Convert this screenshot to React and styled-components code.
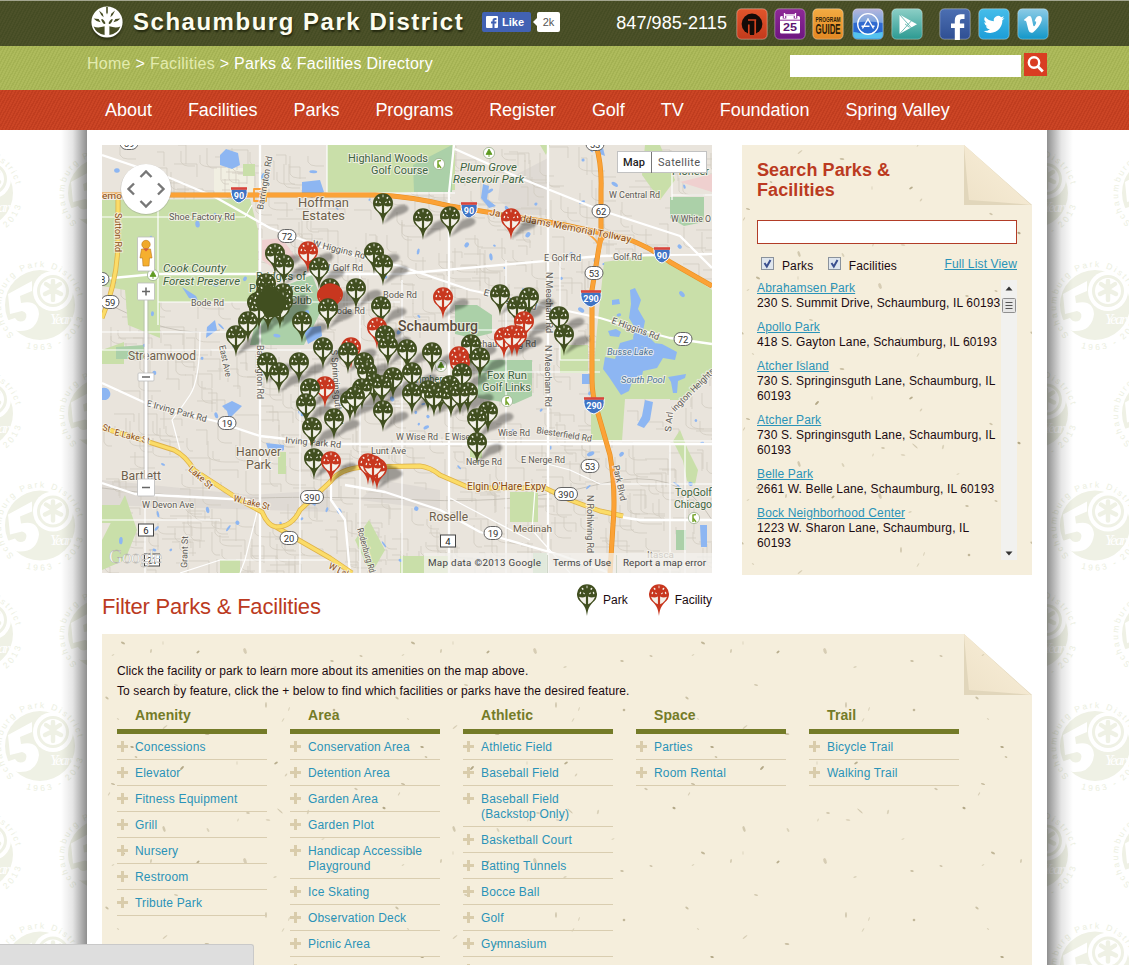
import React from "react";
import styled, { createGlobalStyle, css } from "styled-components";

const Global = createGlobalStyle`
  * { box-sizing: border-box; }
  body { margin: 0; background: #fff; font-family: "Liberation Sans", Arial, sans-serif; font-size: 12px; color: #1b0a10; overflow: hidden; }
  ul { list-style: none; margin: 0; padding: 0; }
  h1, h2, h3, p { margin: 0; }
  svg { display: block; }
`;

/* ---------- shell ---------- */
const Screen = styled.div`
  position: relative;
  height: 965px;
  overflow: hidden;
  display: flex;
  flex-direction: column;
`;
const stripes = (a, b) => css`
  background: repeating-linear-gradient(118deg, ${a} 0 1.6px, ${b} 1.6px 3px);
`;
const Band = styled.div`
  flex: none;
  height: ${(p) => p.$h}px;
  ${(p) => stripes(p.$a, p.$b)}
  ${(p) => p.$edge && `border-top: 1px solid #a3a690;`}
`;
const Inner = styled.div`
  width: 962px;
  height: 100%;
  margin-left: 87px;
  display: flex;
  align-items: ${(p) => p.$align || "center"};
`;

/* ---------- header ---------- */
const Brand = styled.h1`
  font-size: 24px;
  line-height: 28px;
  font-weight: bold;
  letter-spacing: 1.52px;
  color: #fdfdf0;
  margin: -4px 0 0 10px;
  width: 349px;
  white-space: nowrap;
  text-shadow: 1px 2px 2px #23280f;
`;
const Logo = styled.svg`
  margin: -3px 0 0 4px;
  flex: none;
  filter: drop-shadow(0 2px 1px #2b3014);
`;
const Like = styled.div`
  display: flex;
  align-items: center;
  gap: 4px;
  width: 49px;
  height: 20px;
  margin-top: -4px;
  padding-left: 4px;
  border-radius: 2px;
  background: #4262b3;
  color: #fff;
  font-size: 11px;
  font-weight: bold;
`;
const Count = styled.div`
  position: relative;
  width: 23px;
  height: 20px;
  margin: -4px 0 0 6px;
  border-radius: 2px;
  background: #fff;
  color: #555;
  font-size: 11px;
  line-height: 20px;
  text-align: center;
  &::before {
    content: "";
    position: absolute;
    left: -4px;
    top: 6px;
    border: 4px solid transparent;
    border-right-color: #fff;
    border-left: 0;
  }
`;
const Phone = styled.div`
  font-size: 18px;
  letter-spacing: 0.08px;
  color: #fff;
  margin-left: auto;
  padding-right: 9px;
`;
const Tiles = styled.div`
  display: flex;
  margin-top: 0;
`;
const Tile = styled.svg`
  width: 32px;
  height: 32px;
  margin-left: ${(p) => p.$gap || 0}px;
`;
const Crumbs = styled.div`
  font-size: 16px;
  line-height: 20px;
  margin-top: 8px;
  letter-spacing: 0.28px;
  color: #fff;
  white-space: nowrap;
`;
const Faint = styled.span`
  color: #e3ebae;
`;
const SiteSearch = styled.div`
  display: flex;
  margin: 7px 2px 0 auto;
`;
const SiteInput = styled.div`
  width: 231px;
  height: 22px;
  margin: 2px 3px 0 0;
  background: #fff;
`;
const SiteGo = styled.div`
  width: 23px;
  height: 23px;
  background: #d93d22;
`;
const Nav = styled.nav`
  display: flex;
  gap: 36px;
  padding-left: 18px;
  font-size: 18px;
  letter-spacing: -0.035px;
  color: #fff;
  white-space: nowrap;
`;

/* ---------- body ---------- */
const Body = styled.div`
  flex: 1;
  display: flex;
  min-height: 0;
`;
const Gutter = styled.div`
  flex: none;
  width: ${(p) => p.$w}px;
  position: relative;
  &::after {
    content: "";
    position: absolute;
    top: 0;
    bottom: 0;
    ${(p) => p.$side}: 0;
    width: 26px;
    background: linear-gradient(to ${(p) => p.$side}, transparent, rgba(0, 0, 0, 0.1) 45%, rgba(0, 0, 0, 0.44));
  }
`;
const Page = styled.main`
  width: 960px;
  flex: none;
  background: #fff;
  padding: 15px;
  display: flex;
  flex-direction: column;
`;
const Top = styled.div`
  display: flex;
  gap: 30px;
  height: 489px;
  flex: none;
`;
const Left = styled.div`
  width: 610px;
`;
const LegendRow = styled.div`
  display: flex;
  height: 61px;
`;
const FilterTitle = styled.h2`
  font-size: 22px;
  line-height: 26px;
  font-weight: normal;
  letter-spacing: -0.2px;
  color: #bb3a21;
  margin-top: 21px;
  white-space: nowrap;
`;
const Legend = styled.div`
  display: flex;
  margin: 11px 0 0 auto;
  line-height: 32px;
`;
const LegendItem = styled.div`
  display: flex;
  gap: 6px;
  margin-left: 21px;
`;

/* ---------- paper panels ---------- */
const Paper = styled.section`
  position: relative;
  background: #f5eedc;
  width: ${(p) => p.$w}px;
  height: ${(p) => p.$h}px;
`;
const PaperTexture = styled.svg`
  position: absolute;
  inset: 0;
`;
const SearchBody = styled.div`
  position: relative;
  padding: 15px;
`;
const SearchTitle = styled.h2`
  font-size: 18px;
  line-height: 20px;
  color: #bb3a21;
  letter-spacing: 0.08px;
  width: 170px;
`;
const SearchField = styled.div`
  height: 24px;
  margin-top: 20px;
  border: 1px solid #b23c27;
  background: #fff;
`;
const Options = styled.div`
  display: flex;
  align-items: flex-start;
  height: 37px;
  padding: 12px 0 0 4px;
  white-space: nowrap;
  letter-spacing: 0.15px;
`;
const Box = styled.svg`
  margin: 1px 8px 0 0;
`;
const OptionLabel = styled.span`
  line-height: 20px;
  width: ${(p) => p.$w}px;
`;
const Anchor = styled.a`
  color: #2a93b8;
  text-decoration: underline;
  line-height: ${(p) => p.$lh || 15}px;
`;
const ListFrame = styled.div`
  display: flex;
  height: 279px;
`;
const Results = styled.ul`
  width: 245px;
  line-height: 15px;
  letter-spacing: 0.14px;
`;
const Result = styled.li`
  margin-bottom: 9px;
`;
const Address = styled.div`
  width: ${(p) => (p.$wide ? 260 : 242)}px;
`;
const Scrollbar = styled.svg`
  flex: none;
  margin: -1px 0 0 -1px;
`;
const FilterBody = styled.div`
  position: relative;
  padding: 27px 15px 0;
`;
const Intro = styled.p`
  line-height: 20px;
  letter-spacing: 0.1px;
`;
const Columns = styled.div`
  display: flex;
  gap: 23px;
`;
const Column = styled.div`
  width: 150px;
`;
const ColumnTitle = styled.h3`
  height: 33px;
  padding-left: 18px;
  font-size: 14px;
  line-height: 29px;
  letter-spacing: 0.1px;
  color: #747b28;
  border-bottom: 5px solid #747b28;
`;
const Feature = styled.li`
  position: relative;
  padding: 6px 0 4px 18px;
  min-height: 26px;
  line-height: 15px;
  letter-spacing: 0.18px;
  color: #2a93b8;
  border-bottom: 1px solid #d9cdb0;
  &::before,
  &::after {
    content: "";
    position: absolute;
    background: #d9ccab;
  }
  &::before { left: 0; top: 11px; width: 11px; height: 3px; }
  &::after { left: 4px; top: 7px; width: 3px; height: 11px; }
`;
const StatusBar = styled.div`
  position: absolute;
  left: 0;
  bottom: 0;
  width: 254px;
  height: 21px;
  background: #dedede;
  border: 1px solid #c9c9c9;
  border-width: 1px 1px 0 0;
  border-radius: 0 3px 0 0;
`;

/* ---------- drawings ---------- */
const TreeCuts = ({ fill }) => (
  <g fill={fill}>
    <ellipse cx="3.4" cy="9" rx=".7" ry="1.2" transform="rotate(20 3.4 9)" />
    <ellipse cx="16.6" cy="9" rx=".7" ry="1.2" transform="rotate(-20 16.6 9)" />
    <ellipse cx="5.6" cy="4.8" rx=".8" ry="1.2" transform="rotate(-35 5.6 4.8)" />
    <ellipse cx="14.4" cy="4.8" rx=".8" ry="1.2" transform="rotate(35 14.4 4.8)" />
    <ellipse cx="10" cy="3" rx=".5" ry="1.4" />
    <ellipse cx="7" cy="9.400" rx=".6" ry="1.2" transform="rotate(-50 7 9.400)" />
    <ellipse cx="13" cy="9.400" rx=".6" ry="1.2" transform="rotate(50 13 9.400)" />
    <path d="M2 12.8Q5.500 14.200 8.900 12.600V20.300Q3.800 18 2 12.800ZM18 12.800Q14.500 14.200 11.100 12.600V20.300Q16.200 18 18 12.800Z" />
  </g>
);
const PinShape = ({ color }) => (
  <g>
    <path d="M10 32C9.3 26 8 22 4 18.2A10 10 0 1 1 16 18.2C12 22 10.700 26 10 32Z" fill={color} />
    <TreeCuts fill="#f4f2ea" />
  </g>
);
const PARK = "#414f20";
const FACILITY = "#c8371f";
const LegendPin = ({ color }) => (
  <svg width="20" height="32"><PinShape color={color} /></svg>
);

const DistrictLogo = () => (
  <Logo width="32" height="32" viewBox="0 0 32 32">
    <circle cx="16" cy="16" r="15.6" fill="#fff" />
    <g fill="#474d25">
      <path d="M15.2 1h1.6v5.5l-.8 2-.8-2zM8 4.5l3.8 3.3.8 3.5-2.4-2.2zM24 4.5l-3.8 3.3-.8 3.5 2.4-2.2zM2.6 12.5l5 .6 2 3.2-4-1.4zM29.4 12.5l-5 .6-2 3.2 4-1.4z" />
      <ellipse cx="12.3" cy="15.5" rx="1.1" ry="3" transform="rotate(-35 12.3 15.5)" />
      <ellipse cx="19.7" cy="15.5" rx="1.1" ry="3" transform="rotate(35 19.7 15.5)" />
      <path d="M2.6 20.5Q7 22.5 13.6 20.3V29Q5.5 28 2.6 20.5ZM29.4 20.5Q25 22.5 18.4 20.3V29Q26.5 28 29.4 20.5Z" />
    </g>
  </Logo>
);

const TileBase = ({ id, from, to, gap, children }) => (
  <Tile $gap={gap} viewBox="0 0 32 32">
    <defs>
      <linearGradient id={id} x1="0" y1="0" x2="0" y2="1">
        <stop offset="0" stopColor={from} />
        <stop offset="1" stopColor={to} />
      </linearGradient>
    </defs>
    <rect x=".8" y=".8" width="30.4" height="30.4" rx="4.5" fill={`url(#${id})`} stroke="#fff" strokeOpacity=".35" />
    {children}
  </Tile>
);
const HeaderTiles = () => (
  <Tiles>
    <TileBase id="t1" from="#e2552b" to="#c23a1c">
      <circle cx="16" cy="16" r="10.400" fill="#130b08" />
      <path d="M12 12h8.200M12.800 16.500V26.500M19.200 12V26.500" stroke="#d2431f" strokeWidth="1.700" fill="none" />
      <path d="M14 20h4v7h-4z" fill="#130b08" />
    </TileBase>
    <TileBase id="t2" from="#8d2a96" to="#6d1580" gap={6}>
      <rect x="6" y="8" width="20" height="17.5" rx="1.5" fill="#fff" />
      <path d="M6 12.2h20" stroke="#8d2a96" />
      <path d="M10.5 5v5.5M21.5 5v5.5" stroke="#8d2a96" strokeWidth="3.6" />
      <path d="M10.5 5v5M21.5 5v5M10.5 7h11" stroke="#fff" strokeWidth="1.3" fill="none" />
      <text x="16" y="23" textAnchor="middle" fontSize="11" fontWeight="bold" textLength="14" lengthAdjust="spacingAndGlyphs" fill="#5d1470">25</text>
    </TileBase>
    <TileBase id="t3" from="#f3ab42" to="#e28722" gap={6}>
      <text x="3.6" y="13.6" textLength="25" lengthAdjust="spacingAndGlyphs" fontSize="7.6" fontWeight="bold" fill="#2c1d08">PROGRAM</text>
      <text x="3.6" y="25.6" textLength="25" lengthAdjust="spacingAndGlyphs" fontSize="14.5" fontWeight="bold" fill="#2c1d08">GUIDE</text>
    </TileBase>
    <TileBase id="t4" from="#b7b6dc" to="#2b8fe2" gap={8}>
      <path d="M1.5 15Q16 12 30.5 15V24Q16 27 1.5 24Z" fill="#1f5ccc" opacity=".8" />
      <path d="M1.500 24Q16 27 30.500 24V27Q30 30.500 26 30.500H6Q2 30.500 1.500 27Z" fill="#55c3ee" />
      <circle cx="16" cy="16" r="10.3" fill="none" stroke="#fff" strokeWidth="1.300" />
      <path d="M10.500 20.500L16.300 10.500M21.500 20.500L15.700 10.500M9.500 18.200H17.500M20.500 18.200H22.500" stroke="#fff" strokeWidth="1.400" fill="none" />
    </TileBase>
    <TileBase id="t5" from="#8ccfc6" to="#2c9a92" gap={7}>
      <path d="M8.5 6.5L26 16.2 8.5 26Z" fill="#fff" />
      <path d="M8.5 6.5L20.5 20M8.5 26L20.5 12.7M14 15.9l4.5 3.5" stroke="#4aaba2" strokeWidth=".8" />
    </TileBase>
    <TileBase id="t6" from="#4c6fb2" to="#2f4f93" gap={16}>
      <path d="M15.800 32V20H12V15.500H15.800V12.300Q15.800 6.300 21.600 6.300H25.500V11H22.800Q20.900 11 20.900 13V15.500H25.200V20H20.900V32Z" fill="#fff" />
    </TileBase>
    <TileBase id="t7" from="#46bdea" to="#1c9dd8" gap={7}>
      <g transform="translate(5.6 6) scale(.87)">
        <path fill="#fff" d="M23.95 4.57a10 10 0 0 1-2.82.77 4.96 4.96 0 0 0 2.16-2.72c-.95.55-2 .96-3.13 1.18a4.92 4.92 0 0 0-8.38 4.48C7.69 8.1 4.07 6.13 1.64 3.16a4.92 4.92 0 0 0 1.52 6.57 4.9 4.9 0 0 1-2.23-.61v.06a4.92 4.92 0 0 0 3.95 4.83 5 5 0 0 1-2.21.08 4.94 4.94 0 0 0 4.6 3.42A9.87 9.87 0 0 1 0 19.54a14 14 0 0 0 7.55 2.21c9.05 0 14-7.5 14-13.98 0-.21 0-.42-.02-.63a9.94 9.94 0 0 0 2.46-2.55z" />
      </g>
    </TileBase>
    <TileBase id="t8" from="#8ccbe6" to="#1297c9" gap={7}>
      <path d="M7 11.800L11.200 8.300Q14 7.200 14.700 10.500L16.200 17.200Q17 19.800 19 15.400 19.900 12.800 17.600 13.200 19 7.700 22.600 7.900 25.600 8.300 24.600 12.800 22.600 19 16 24.400 12.600 25.800 11.400 22L9.400 14Q8.800 12.200 7.800 13Z" fill="#fff" />
    </TileBase>
  </Tiles>
);

/* speckles: x, y, rx, ry, angle, opacity */
const SPECKS = [
  [21, 9, 2.2, 1, 25, 0.6], [61, 9, 0.6, 2, 0, 0.25], [49, 17, 0.6, 2, 5, 0.6], [96, 18, 1.8, 1, -35, 0.7], [143, 17, 1.6, 3, -20, 0.35],
  [259, 22, 1.6, 0.9, 20, 0.45], [230, 27, 1.8, 0.9, 10, 0.5], [11, 21, 1.5, 0.6, -30, 0.3], [173, 33, 1.8, 0.8, -20, 0.3], [74, 51, 2, 0.9, 15, 0.4],
  [5, 64, 2, 1, 40, 0.5], [164, 71, 0.6, 3, 0, 0.65], [187, 75, 0.6, 2, 20, 0.3], [181, 86, 2.4, 0.6, -60, 0.3], [16, 85, 1.3, 0.7, 30, 0.3],
  [232, 76, 1.3, 1.3, 0, 0.6], [63, 93, 3, 0.7, -40, 0.35], [105, 100, 2.4, 0.9, 8, 0.5], [30, 113, 1.8, 1, 15, 0.75], [34, 123, 1.4, 0.9, 20, 0.5],
  [135, 129, 0.6, 2, 0, 0.25], [174, 129, 2, 1, -30, 0.7], [80, 134, 2.5, 1, -45, 0.75], [11, 150, 2.1, 0.9, 15, 0.55], [7, 160, 2, 0.6, -60, 0.35],
  [184, 141, 1.8, 0.7, -50, 0.35], [254, 155, 1.8, 0.9, 25, 0.45], [282, 174, 1.7, 1.1, 30, 0.75], [178, 177, 3.6, 0.6, 42, 0.4], [146, 179, 1.9, 1, 10, 0.4],
  [206, 178, 1, 2.2, 15, 0.3], [136, 186, 0.6, 1.6, 20, 0.3], [166, 186, 2.4, 0.7, 8, 0.35], [62, 195, 1.3, 3, -20, 0.4], [106, 196, 1, 2.2, -30, 0.3], [221, 205, 1.6, 0.6, -20, 0.3],
];
const Texture = ({ id, w, h, ox, oy, fw, fh }) => (
  <PaperTexture width={w} height={h}>
    <defs>
      <pattern id={id} width="290" height="210" patternUnits="userSpaceOnUse" x={ox} y={oy}>
        {SPECKS.map(([x, y, rx, ry, a, o], i) => (
          <ellipse key={i} cx={x} cy={y} rx={rx} ry={ry} transform={`rotate(${a} ${x} ${y})`} fill="#8f8158" opacity={o * 0.85} />
        ))}
      </pattern>
      <linearGradient id={`${id}f`} x1="0" y1="1" x2=".6" y2=".4">
        <stop offset="0" stopColor="#eee2c8" />
        <stop offset="1" stopColor="#f5ead3" />
      </linearGradient>
    </defs>
    <path d={`M${w - fw} 0H${w}V${fh}Z`} fill="#fff" />
    <path d={`M${w - fw} 0V${fh}L${w} ${fh}Z`} fill="#d9ccad" opacity=".7" />
    <path d={`M${w - fw} 0Q${w - fw + 3} ${fh * 0.6} ${w - fw + 5} ${fh - 5}Q${w - 32} ${fh - 3} ${w - 1} ${fh}Z`} fill={`url(#${id}f)`} />
    <path d={`M0 0H${w - fw}L${w} ${fh}V${h}H0Z`} fill={`url(#${id})`} />
  </PaperTexture>
);

const Watermark = ({ x, y }) => (
  <g transform={`translate(${x} ${y})`}>
    <circle r="35" fill="#eff1e5" />
    <path d="M-32 -11L-8 -24V-14L-20 -9 -19 -2Q-2 -6 -1 9 -3 27 -22 26 -32 24 -34 16L-25 13Q-21 19 -15 15 -11 8 -18 6L-30 9Z" fill="#fff" />
    <circle cx="13" cy="-14" r="20" fill="#fff" />
    <circle cx="13" cy="-14" r="14.500" fill="none" stroke="#eff1e5" strokeWidth="3" />
    <g stroke="#eff1e5" strokeWidth="4.500" strokeLinecap="round">
      <path d="M13 -14V-5M12 -17L6 -21M14 -17L20 -21M11 -14L5 -11M15 -14L21 -11M13 -18V-24" />
    </g>
    <text x="10" y="19" fontSize="15" fontStyle="italic" fontFamily="Liberation Serif, serif" fill="#fff" textLength="26">Years</text>
    <text fontSize="8.500" letterSpacing="2.100" fill="#ecefe1"><textPath href="#ringTop">Schaumburg Park District</textPath></text>
    <text fontSize="8.500" letterSpacing="2.600" fill="#ecefe1"><textPath href="#ringLow">1963 - 2013</textPath></text>
  </g>
);
const Marks = ({ w, cols }) => (
  <svg width={w} height="835" viewBox={`0 130 ${w} 835`}>
    <defs>
      <path id="ringTop" d="M-26 30A39 39 0 1 1 39 4" />
      <path id="ringLow" d="M-14 43A45.500 45.500 0 0 0 45 3" />
    </defs>
    {[0, 1, 2, 3].map((r) => (
      <g key={r}>
        <Watermark x={cols[0]} y={193 + r * 220.5} />
        <Watermark x={cols[2]} y={193 + r * 220.5} />
        <Watermark x={cols[1]} y={305 + r * 220.5} />
      </g>
    ))}
  </svg>
);

/* ---------- map ---------- */
const MapSvg = styled.svg`
  font-family: Roboto, sans-serif;
`;
const P = [
  [383, 203], [423, 218], [450, 216], [511, 218, 1], [374, 252], [275, 253], [308, 251, 1], [383, 264], [284, 264], [319, 267],
  [266, 283], [356, 288], [330, 288], [266, 293], [283, 293], [500, 294], [327, 295, 1], [333, 294, 1], [330, 293, 1], [443, 297, 1], [529, 297],
  [257, 302], [262, 299], [283, 301], [270, 303], [273, 297], [381, 306], [517, 306], [268, 309], [280, 307], [259, 308], [328, 308], [559, 316], [302, 321],
  [248, 321], [524, 321, 1], [377, 327, 1], [564, 334], [236, 335], [385, 335], [517, 335, 1], [504, 337, 1], [512, 335, 1], [471, 344],
  [388, 345], [323, 347], [351, 347, 1], [348, 352], [407, 349], [432, 352], [459, 356, 1], [480, 357], [299, 362], [267, 362], [364, 362], [460, 362, 1],
  [367, 371], [279, 372], [462, 373], [412, 372], [393, 377], [374, 383], [382, 385], [325, 386, 1], [450, 385], [310, 388], [362, 388], [428, 390], [468, 392], [412, 393], [440, 392], [434, 395],
  [451, 396], [460, 393], [350, 400], [355, 396], [306, 403], [383, 410], [488, 411], [334, 418], [477, 418], [312, 427], [477, 442], [314, 458], [331, 461, 1], [368, 463, 1], [377, 468, 1], [373, 465, 1],
];
const rng = (() => {
  let s = 77;
  return () => ((s = (s * 16807) % 2147483647) / 2147483647);
})();
const STREETS = Array.from({ length: 900 }, () => {
  const x = Math.round(102 + rng() * 610), y = Math.round(145 + rng() * 428);
  const l = 6 + rng() * 20, h = 5 + rng() * 16;
  return rng() > 0.5 ? `M${x} ${y}h${l.toFixed(0)}v${h.toFixed(0)}` : `M${x} ${y}v${h.toFixed(0)}q2 4 ${(l / 2).toFixed(0)} 4h${(l / 2).toFixed(0)}`;
}).join("");
const PONDS = Array.from({ length: 100 }, () => {
  const x = 105 + rng() * 600, y = 148 + rng() * 415;
  return [x, y, 1 + rng() * 3, 0.8 + rng() * 1.5, rng() * 180];
});
const WHITE_MAIN =
  "M102 155L170 178 215 197 270 228 330 250 400 266 470 290 540 305 600 318 640 330 670 338 712 344M102 383L150 405 215 421 260 436 330 444 712 444M260 573V145M454 145L449 193V573M548 145V573M102 279L155 274H400L600 256 712 254M455 149L520 178 600 210 680 236 712 268M345 485L385 492 440 510 480 532 560 555 610 573M331 460V500L345 520 350 573M102 483L135 494 250 500M620 517L640 520H712";
const WHITE_MINOR =
  "M102 217H245L252 205M158 180V325M158 302H400M102 332H240M200 332Q200 380 190 395T172 420L180 450M360 573V262M402 573V280M327 145V193H455M506 260V573M600 360H560V260M455 372H600M590 443H670V573M540 462L570 470 600 484H712M672 200V160M672 195H712M450 498L530 540M260 480V500L245 560 240 573M102 350H360M145 573V500M400 330H548M300 350V573M306 406H400M180 573L220 560H330M418 440L712 441M685 443V573M535 490L532 530 570 573M102 520H220";

const Shield = ({ x, y, n }) => (
  <g transform={`translate(${x} ${y})`}>
    <path d={n.length > 2 ? "M-10 -6H10Q11 2 7 5T0 9Q-3 9-7 5T-10-6Z" : "M-8 -6H8Q9 2 5 5T0 8Q-2 8-5 5T-8-6Z"} fill="#3f73c4" stroke="#fff" />
    <path d={n.length > 2 ? "M-10 -6.5H10" : "M-8 -6.5H8"} stroke="#d9453c" strokeWidth="2.6" />
    <text y="4.2" fontSize="9" fontWeight="bold" fill="#fff" textAnchor="middle">{n}</text>
  </g>
);
const Oval = ({ x, y, n }) => (
  <g>
    <rect x={x - (n.length > 2 ? 11.5 : 9)} y={y - 6.5} width={n.length > 2 ? 23 : 18} height="13" rx="6.5" fill="#fff" stroke="#555" strokeWidth=".9" />
    <text x={x} y={y + 3.5} fontSize="9.5" fill="#333" textAnchor="middle">{n}</text>
  </g>
);
const Plate = ({ x, y, n }) => (
  <g>
    <rect x={x - 7.5} y={y - 6} width="15" height="12" fill="#fff" stroke="#444" />
    <text x={x} y={y + 3.6} fontSize="9.5" fill="#222" textAnchor="middle">{n}</text>
  </g>
);
/* text, x, y, width, size, colour, rotation, style */
const ROAD = "#5d5a55", TOWN = "#6e5f4c", GREEN = "#3d6340", HWY = "#8a4b10";
const LABELS = [
  ["Highland Woods", 348, 162, 80, 11, GREEN], ["Golf Course", 371, 174, 57, 11, GREEN],
  ["Plum Grove", 460, 171, 57, 11, GREEN, 0, "italic"], ["Reservoir Park", 453, 183, 71, 11, GREEN, 0, "italic"],
  ["Hoffman", 298, 207, 51, 12.5, TOWN], ["Estates", 302, 220, 43, 12.5, TOWN],
  ["Cook County", 163, 272, 63, 11, GREEN, 0, "italic"], ["Forest Preserve", 163, 285, 77, 11, GREEN, 0, "italic"],
  ["Shoe Factory Rd", 169, 220, 66, 9, ROAD], ["Bode Rd", 191, 306, 33, 9, ROAD], ["Bode Rd", 383, 298, 34, 9, ROAD], ["Bode Rd", 331, 314, 34, 9, ROAD],
  ["Streamwood", 128, 360, 68, 12, TOWN], ["Schaumburg", 398, 331, 80, 14, "#5a4d3f"],
  ["Hanover", 236, 456, 45, 12.5, TOWN], ["Park", 246, 469, 25, 12.5, TOWN], ["Bartlett", 121, 480, 40, 12, TOWN],
  ["Bridges of", 256, 280, 50, 11, GREEN], ["Poplar Creek", 249, 292, 62, 11, GREEN], ["Country Club", 249, 304, 63, 11, GREEN],
  ["W Higgins Rd", 312, 246, 54, 9, ROAD, 14], ["W Golf Rd", 322, 271, 41, 9, ROAD], ["E Golf Rd", 544, 261, 37, 9, ROAD], ["Golf Rd", 613, 260, 29, 9, ROAD],
  ["W Central Rd", 609, 198, 51, 9, ROAD], ["W White O", 671, 222, 40, 9, ROAD], ["E Higgins Rd", 611, 323, 50, 9, ROAD, 20],
  ["E Higgins Rd", 483, 295, 55, 9, ROAD, 16], ["W Schaumburg Rd", 462, 347, 74, 9, ROAD],
  ["Jane Addams Memorial Tollway", 489, 215, 144, 9.5, HWY, 11],
  ["Barrington Rd", 263, 210, 54, 9, ROAD, -80], ["Sutton Rd", 115, 213, 39, 9, HWY, 90], ["Barrington Rd", 257, 345, 54, 9, ROAD, 90], ["East Ave", 219, 346, 32, 9, ROAD, 78],
  ["N Meacham Rd", 546, 272, 61, 9, ROAD, 90], ["N Meacham Rd", 545, 345, 62, 9, ROAD, 90], ["S Springinsguth Rd", 331, 350, 75, 9, ROAD, 86],
  ["E Irving Park Rd", 146, 406, 62, 9, ROAD, 15], ["Irving Park Rd", 285, 443, 56, 9, ROAD, 5],
  ["E Lake St", 114, 435, 36, 9, HWY, 14], ["St", 102, 430, 8, 9, HWY, 14], ["Lake St", 188, 470, 29, 9, HWY, 42], ["W Lake St", 233, 501, 37, 9, HWY, 14], ["W Lake St", 328, 568, 37, 9, HWY, 26],
  ["W Devon Ave", 142, 508, 52, 9, ROAD], ["Grant St", 187, 568, 32, 9, ROAD, -88], ["Rodenburg Rd", 357, 529, 46, 9, ROAD, 74],
  ["W Wise Rd", 396, 440, 42, 9, ROAD], ["E Wise Rd", 445, 440, 37, 9, ROAD], ["Wise Rd", 498, 436, 32, 9, ROAD], ["Biesterfield Rd", 536, 433, 56, 9, ROAD, 9],
  ["Lunt Ave", 371, 454, 35, 9, ROAD], ["Nerge Rd", 466, 465, 36, 9, ROAD], ["E Nerge Rd", 521, 463, 44, 9, ROAD],
  ["Elgin O'Hare Expy", 467, 490, 79, 10, HWY], ["Roselle", 429, 521, 39, 12, TOWN], ["Medinah", 513, 532, 39, 9.5, TOWN], ["Itasca", 647, 558, 27, 9.5, TOWN],
  ["N Rohlwing Rd", 587, 495, 58, 9, ROAD, 90], ["Park Blvd", 613, 466, 36, 9, ROAD, 78],
  ["Busse Lake", 607, 355, 46, 9, "#4b7296", 0, "italic"], ["South Pool", 621, 383, 44, 9, "#4b7296", 0, "italic"],
  ["S Arl", 671, 432, 20, 9, ROAD, -84], ["ington Heights", 675, 412, 57, 9, ROAD, -45],
  ["Fox Run", 487, 379, 40, 11, GREEN], ["Golf Links", 482, 391, 49, 11, GREEN], ["Timbercrest", 414, 383, 48, 10, GREEN],
  ["TopGolf", 675, 496, 37, 11, GREEN], ["Chicago", 674, 508, 38, 11, GREEN], ["Pioneer", 672, 175, 37, 11, GREEN],
  ["emo", 102, 199, 20, 9.5, HWY],
];
const Leaf = ({ x, y, t }) => (
  <g>
    <circle cx={x} cy={y} r="5.6" fill="#fff" stroke="#9cb08d" strokeWidth=".8" />
    {t ? <path d={`M${x} ${y - 4}l3 5.4h-6zM${x} ${y}v4`} fill="#5f9a21" stroke="#5f9a21" strokeWidth=".8" /> : <path d={`M${x - 1} ${y + 4}v-7l3-.6M${x - 1} ${y}l3 4`} stroke="#77a52d" strokeWidth="1.5" fill="none" />}
  </g>
);
const ParkMap = () => (
  <MapSvg width="610" height="428" viewBox="102 145 610 428">
    <defs>
      <filter id="soft" x="-50%" y="-50%" width="200%" height="200%"><feGaussianBlur stdDeviation="1.1" /></filter>
    </defs>
    <rect x="102" y="145" width="610" height="428" fill="#e9e4dc" />
    <path d="M500 183L548 158V215H520L498 200ZM102 480L250 495 330 490V512L102 505ZM380 480L440 490V510L360 500Z" fill="#dfdad4" />
    <path d="M214 168h40v28h-40z" fill="#f1efe2" />
    <path d={STREETS} stroke="#d0cabf" strokeWidth=".7" fill="none" />
    <path d="M102 488Q200 500 260 498T420 500 600 484 712 520M102 300Q170 340 220 330" stroke="#bfbab0" strokeWidth=".8" fill="none" />
    <g fill="#c9dfa9">
      <path d="M327 145H455V190L400 193 327 192ZM102 200L250 199 258 230V302H160V338L128 325 125 290 102 286ZM604 262L660 254 712 290V372L684 400H670V399H625L622 441H591V400L597 330ZM102 540L125 495 137 530 125 560 102 570ZM645 145H660L675 180 660 200 642 175ZM102 505h22v18h-22zM243 164h12v12h-12zM278 452h8v22h-8zM355 540l14-20 16 30-14 24zM560 345h28v28h-28zM102 350l22-8v22h-22zM680 430l8 20 10 20-3 15-8-4-4-20-10-20zM510 492h28v30h-28zM400 556h50v17h-50zM220 560h20v13h-20zM470 450h12v8h-12zM540 145h10l-4 10z" />
    </g>
    <g fill="#abd0a8">
      <path d="M413 165L452 145V192H414ZM670 197h34v25l-20 4-14-8zM455 305h22l15 10v18l-20 5-17-4zM116 347l28-2v14h-28zM478 360h54v36l-18 8-36-6zM250 345l12-50 50-20 12 30-20 40zM533 553h14v20h-14zM676 530h10v20h-10z" />
    </g>
    <path d="M680 182l32 10v-18zM262 240l20-2 14 20-20 12-14-10zM640 400l20 5z" fill="#efd0cf" />
    <g fill="#8db6f2">
      {PONDS.map(([x, y, a, b, r], i) => <ellipse key={i} cx={x} cy={y} rx={a} ry={b} transform={`rotate(${r} ${x} ${y})`} />)}
      <path d="M630 290l5-2 6 12-3 9 7 12-2 10 12 12-2 7-10-4-6 2-4-10 2-10-6-10 2-14zM612 300l7-1 1 5-8 1zM608 331l8-2 5 3-2 5-9-1zM620 343l14-4 8 8 4-5 16 2 15 8-2 8-12-2-6 10-14 3-2 10-8-2-4 12-8 4-12-18-6-8 2-12 10 2zM668 377l18-3-1 4-7 3-1 12-4 0-2-11zM645 400l8 2-3 18-6 8-7-3 5-9zM220 155l6-6 12 4 2 12-8 4-12-4zM302 182l18-2 4 12-12 6-10-4zM222 406l10-5 10 5-5 5-8 8-2-8zM207 327l8-7 2 10-11 8zM483 184l6 2-2 13 9 7-7 2-8-10zM595 152l8-4 2 8zM266 443l18 2v5l-16-1zM102 388a6 6 0 0 1 4 12h-4zM303 328l18-2 1 10-14 8zM305 500l16-6-6 12zM700 525h7v22h-6zM582 374h8v10h-8zM182 287l14 9 2 5-9-3z" />
    </g>
    <path d={WHITE_MINOR} stroke="#fff" strokeWidth="1.2" fill="none" />
    <path d={WHITE_MAIN} stroke="#fff" strokeWidth="2.3" fill="none" strokeLinejoin="round" />
    <g fill="none" strokeLinejoin="round">
      {["M118 195V240Q118 280 102 318", "M102 428L130 436 174 450Q186 456 194 470L240 500 262 512Q268 526 276 527L330 558 352 573", "M276 527Q292 527 300 510L330 482Q340 468 365 467L420 466Q430 467 440 475L470 488 545 488 570 500 600 511 623 516"].map((d) => (
        <g key={d}>
          <path d={d} stroke="#dfb248" strokeWidth="5" />
          <path d={d} stroke="#fbdc68" strokeWidth="3.4" />
        </g>
      ))}
      {["M102 195H375Q410 196 450 206L560 224 625 238Q650 247 670 262L712 286", "M596 145Q602 165 601 190V235L592 290V380Q592 395 597 410L610 455Q616 490 613 525L610 573"].map((d) => (
        <g key={d}>
          <path d={d} stroke="#e8901f" strokeWidth="5" />
          <path d={d} stroke="#fba237" strokeWidth="3.8" />
        </g>
      ))}
      <path d="M254 189v12h12v-12zM585 232q14 8 15 18 0-10 8-16" stroke="#fba237" strokeWidth="1.8" />
    </g>
    {LABELS.map(([t, x, y, w, s, c, r, st], i) => (
      <text key={i} x={x} y={y} textLength={w} lengthAdjust="spacingAndGlyphs" fontSize={s} fill={c} fontStyle={st || "normal"} transform={r ? `rotate(${r} ${x} ${y})` : undefined} stroke="#f6f3ec" strokeWidth="2" strokeOpacity=".8" paintOrder="stroke" fontWeight={t === "Schaumburg" ? 500 : 400}>{t}</text>
    ))}
    <Leaf x={439} y={164} /><Leaf x={489} y={153} t /><Leaf x={153} y={275} t /><Leaf x={507} y={401} /><Leaf x={441} y={366} t /><Leaf x={694} y={518} />
    <Shield x={239} y={195} n="90" /><Shield x={469} y={210} n="90" /><Shield x={662} y={255} n="90" /><Shield x={591} y={298} n="290" /><Shield x={594} y={405} n="290" />
    <Oval x={287} y={236} n="72" /><Oval x={601} y={211} n="62" /><Oval x={594} y={273} n="53" /><Oval x={683} y={339} n="72" /><Oval x={110} y={302} n="59" /><Oval x={100} y={279} n="58" />
    <Oval x={227} y={423} n="19" /><Oval x={312} y={497} n="390" /><Oval x={590} y={466} n="53" /><Oval x={566} y={494} n="390" /><Oval x={493} y={533} n="19" /><Oval x={595} y={144} n="53" /><Oval x={129} y={143} n="59" /><Oval x={289} y={538} n="20" />
    <Plate x={146} y={530} n="6" /><Plate x={448} y={541} n="4" /><Plate x={152} y={560} n="21" />
    <g fill="#000" opacity=".32" filter="url(#soft)">
      {P.map(([x, y], i) => <path key={i} d={`M${x} ${y + 21}L${x + 11} ${y + 5}Q${x + 22} ${y - 1} ${x + 25} ${y + 4}T${x + 13} ${y + 13}Z`} />)}
    </g>
    {P.map(([x, y, f], i) => <g key={i} transform={`translate(${x - 10} ${y - 10})`}><PinShape color={f ? FACILITY : PARK} /></g>)}
    <circle cx="330" cy="295" r="11" fill={FACILITY} />
    <g transform="translate(318 298)"><PinShape color={PARK} /></g>
    <path d="M256 300l10-16 14 8 8 10-8 14-14 2z" fill={PARK} />

    <g>
      <circle cx="146" cy="189.500" r="25.500" fill="#8a8a8a" opacity=".35" />
      <circle cx="146" cy="189" r="25" fill="#fff" />
      <path d="M140.500 177l5.500-5.500 5.500 5.500M140.500 201l5.500 5.500 5.500-5.500M134 183.500l-5.500 5.500 5.500 5.500M158 183.500l5.500 5.500-5.500 5.500" fill="none" stroke="#777" strokeWidth="2.400" />
      <path d="M146 299V480" stroke="#fff" strokeWidth="3" />
      <path d="M144 299V480M148 299V480" stroke="#aaa" strokeWidth=".5" />
      <g fill="#fff" stroke="#bbb" strokeWidth=".8">
        <rect x="137.500" y="237" width="17" height="34" rx="1" />
        <rect x="137.500" y="283" width="17" height="17" rx="1" />
        <rect x="138" y="373" width="16" height="8" rx="1" />
        <rect x="137.500" y="479" width="17" height="17" rx="1" />
      </g>
      <path d="M142 291.500h8M146 287.500v8M142 377h8M142 487.500h8" stroke="#666" strokeWidth="1.500" />
      <circle cx="146" cy="244.500" r="4.200" fill="#f0a92a" stroke="#b9791b" strokeWidth=".6" />
      <path d="M141.500 249h9l1.500 9h-2.500l-.5 8h-6l-.5-8h-2.500z" fill="#f5af2e" stroke="#b9791b" strokeWidth=".6" />
      <path d="M143 248.500h6l-3 3z" fill="#d65c3c" />
    </g>
    <text x="109" y="563" fontSize="19" fontFamily="Liberation Serif, serif" fill="#fff" stroke="#a8a59e" strokeWidth=".4" textLength="53">Google</text>
    <rect x="617.500" y="151.500" width="89" height="21" fill="#fff" stroke="#c2c2c2" />
    <path d="M651.500 152v21" stroke="#777" />
    <text x="623" y="166" fontSize="11" fontWeight="500" fill="#222" textLength="22">Map</text>
    <text x="658" y="166" fontSize="11" fill="#555" textLength="42">Satellite</text>
    <rect x="424" y="553" width="288" height="20" fill="#f3f1ed" opacity=".75" />
    <path d="M547.500 555v18M616.500 555v18" stroke="#cfd6c8" />
    <g fontSize="9.800" fill="#444">
      <text x="428" y="566" textLength="113">Map data ©2013 Google</text>
      <text x="553" y="566" textLength="58">Terms of Use</text>
      <text x="623" y="566" textLength="83">Report a map error</text>
    </g>
  </MapSvg>
);

const Check = () => (
  <Box width="13" height="13">
    <rect x=".5" y=".5" width="12" height="12" fill="#dfe6ee" stroke="#8a929c" />
    <path d="M3.500 6l2.300 3.500L9.500 3" fill="none" stroke="#3a4f8f" strokeWidth="2" />
  </Box>
);

const RESULTS = [
  ["Abrahamsen Park", "230 S. Summit Drive, Schaumburg, IL 60193", true],
  ["Apollo Park", "418 S. Gayton Lane, Schaumburg, IL 60193", true],
  ["Atcher Island", "730 S. Springinsguth Lane, Schaumburg, IL 60193"],
  ["Atcher Park", "730 S. Springinsguth Lane, Schaumburg, IL 60193"],
  ["Belle Park", "2661 W. Belle Lane, Schaumburg, IL 60193", true],
  ["Bock Neighborhood Center", "1223 W. Sharon Lane, Schaumburg, IL 60193"],
];
const COLUMNS = [
  ["Amenity", ["Concessions", "Elevator", "Fitness Equipment", "Grill", "Nursery", "Restroom", "Tribute Park"]],
  ["Area", ["Conservation Area", "Detention Area", "Garden Area", "Garden Plot", "Handicap Accessible Playground", "Ice Skating", "Observation Deck", "Picnic Area", ""]],
  ["Athletic", ["Athletic Field", "Baseball Field", "Baseball Field (Backstop Only)", "Basketball Court", "Batting Tunnels", "Bocce Ball", "Golf", "Gymnasium", ""]],
  ["Space", ["Parties", "Room Rental"]],
  ["Trail", ["Bicycle Trail", "Walking Trail"]],
];
const NAV = ["About", "Facilities", "Parks", "Programs", "Register", "Golf", "TV", "Foundation", "Spring Valley"];

export default function App() {
  return (
    <Screen>
      <Global />
      <Band $h={46} $a="#4c5129" $b="#454c24" $edge>
        <Inner>
          <DistrictLogo />
          <Brand>Schaumburg Park District</Brand>
          <Like>
            <svg width="12" height="12"><rect width="12" height="12" rx="1" fill="#fff" /><path d="M6.500 12V7.500H5V5.500h1.500V4.500Q6.500 2 9 2h1.500v2H9.300Q8.500 4 8.500 4.700v.8h2l-.3 2H8.500V12z" fill="#4262b3" /></svg>
            Like
          </Like>
          <Count>2k</Count>
          <Phone>847/985-2115</Phone>
          <HeaderTiles />
        </Inner>
      </Band>
      <Band $h={44} $a="#aebb5c" $b="#a4b253">
        <Inner $align="flex-start">
          <Crumbs><Faint>Home</Faint> &gt; <Faint>Facilities</Faint> &gt; Parks &amp; Facilities Directory</Crumbs>
          <SiteSearch>
            <SiteInput />
            <SiteGo>
              <svg width="23" height="23"><circle cx="10" cy="9.500" r="5.200" fill="none" stroke="#fff" strokeWidth="2.400" /><path d="M13.800 13.500l5 5" stroke="#fff" strokeWidth="2.800" /></svg>
            </SiteGo>
          </SiteSearch>
        </Inner>
      </Band>
      <Band $h={40} $a="#cb4525" $b="#c03d1f">
        <Inner>
          <Nav>{NAV.map((n) => <span key={n}>{n}</span>)}</Nav>
        </Inner>
      </Band>
      <Body>
        <Gutter $w={87} $side="right"><Marks w={87} cols={[-22, 40, 103]} /></Gutter>
        <Page>
          <Top>
            <Left>
              <ParkMap />
              <LegendRow>
                <FilterTitle>Filter Parks &amp; Facilities</FilterTitle>
                <Legend>
                  <LegendItem><LegendPin color={PARK} />Park</LegendItem>
                  <LegendItem><LegendPin color={FACILITY} />Facility</LegendItem>
                </Legend>
              </LegendRow>
            </Left>
            <Paper $w={290} $h={430}>
              <Texture id="specksA" w={290} h={430} ox={-5} oy={-86} fw={68} fh={60} />
              <SearchBody>
                <SearchTitle>Search Parks &amp; Facilities</SearchTitle>
                <SearchField />
                <Options>
                  <Check /><OptionLabel $w={46}>Parks</OptionLabel>
                  <Check /><OptionLabel $w={96}>Facilities</OptionLabel>
                  <Anchor $lh={17}>Full List View</Anchor>
                </Options>
                <ListFrame>
                  <Results>
                    {RESULTS.map(([n, a, wide]) => (
                      <Result key={n}><Anchor>{n}</Anchor><Address $wide={wide}>{a}</Address></Result>
                    ))}
                  </Results>
                  <Scrollbar width="16" height="280">
                    <rect width="16" height="280" fill="#f1f1ef" />
                    <path d="M4.500 10.500h7L8 6.500zM4.500 271.500h7L8 275.500z" fill="#333" />
                    <rect x="1.500" y="18.500" width="13" height="14" rx="1" fill="#e6e6e6" stroke="#8f8f8f" />
                    <path d="M4.500 22.500h7M4.500 25.500h7M4.500 28.500h7" stroke="#555" />
                  </Scrollbar>
                </ListFrame>
              </SearchBody>
            </Paper>
          </Top>
          <Paper $w={930} $h={340}>
            <Texture id="specksB" w={930} h={340} ox={0} oy={0} fw={68} fh={61} />
            <FilterBody>
              <Intro>Click the facility or park to learn more about its amenities on the map above.</Intro>
              <Intro>To search by feature, click the + below to find which facilities or parks have the desired feature.</Intro>
              <Columns>
                {COLUMNS.map(([title, items]) => (
                  <Column key={title}>
                    <ColumnTitle>{title}</ColumnTitle>
                    <ul>{items.map((t, i) => <Feature key={i}>{t}</Feature>)}</ul>
                  </Column>
                ))}
              </Columns>
            </FilterBody>
          </Paper>
        </Page>
        <Gutter $w={82} $side="left"><Marks w={82} cols={[-14, 48, 110]} /></Gutter>
      </Body>
      <StatusBar />
    </Screen>
  );
}
